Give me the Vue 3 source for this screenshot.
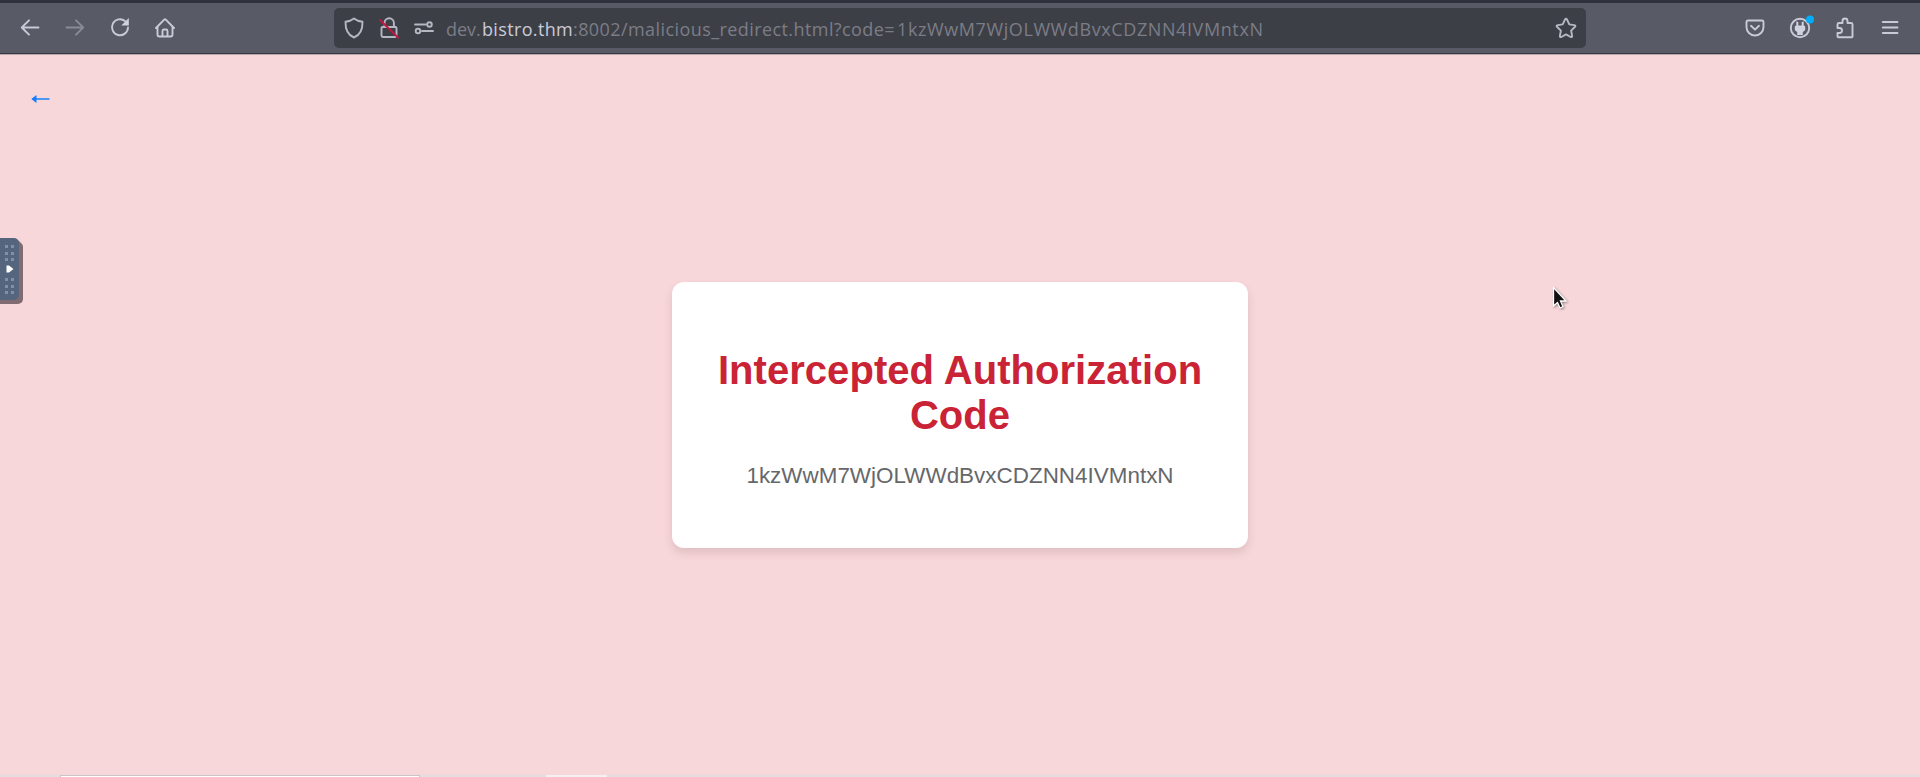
<script setup>
const code = '1kzWwM7WjOLWWdBvxCDZNN4IVMntxN'
</script>

<template>
  <div class="window">
    <header class="toolbar">
      <nav class="nav">
        <svg class="icon" viewBox="0 0 24 24"><path d="M20.500 11.500H4M11 4.300l-7.200 7.200 7.200 7.200" /></svg>
        <svg class="icon dim" viewBox="0 0 24 24"><path d="M3.500 11.500H20M13 4.300l7.200 7.200-7.200 7.200" /></svg>
        <svg class="icon" viewBox="0 0 24 24"><path d="M20 11.500A8 8 0 1 1 17 5" /><path class="solid" d="M20.800 2v7.500h-7.500z" /></svg>
        <svg class="icon" viewBox="0 0 24 24"><path d="M3 12l8.200-8.300q.8-.7 1.600 0L21 12M4.500 11v7.500q0 2 2 2h11q2 0 2-2V11M9.500 20v-5q0-1.500 1.500-1.500h2q1.500 0 1.500 1.500v5" /></svg>
      </nav>

      <div class="address">
        <div class="site">
          <svg class="icon" viewBox="0 0 24 24"><path d="M12 2.500C9.500 4.500 6.500 5.400 3.500 5.800 3.300 12.500 5.200 18.800 12 21.500 18.800 18.800 20.700 12.500 20.500 5.800 17.500 5.400 14.500 4.500 12 2.500z" /></svg>
          <svg class="icon" viewBox="0 0 24 24"><path d="M7.500 11V7a4.700 4.700 0 0 1 9.400 0v4M5.500 11h13q1 0 1 1v7.500q0 1.500-1.500 1.500H6q-1.500 0-1.500-1.500V12q0-1 1-1z" /><path class="slash" d="M3 4l18 17.500" /></svg>
          <svg class="icon" viewBox="0 0 24 24"><path d="M3 8.500h11M10 15h11" /><circle cx="17.500" cy="8.500" r="2.300" /><circle cx="6" cy="15" r="2.300" /></svg>
        </div>
        <div class="url"><span class="sub">dev.</span><span class="host">bistro.thm</span><span class="path">:8002/malicious_redirect.html?code=</span><span class="value">{{ code }}</span></div>
        <svg class="icon star" viewBox="0 0 24 24"><path d="M11 3.500q1-1.700 2 0l2.300 4.900 5 .7q1.800.4.700 1.700l-3.900 3.800 1 5.200q.1 1.700-1.400 1.200L12 18.400 7.300 21q-1.500.5-1.400-1.200l1-5.200L3 10.800q-1.100-1.300.7-1.700l5-.7z" /></svg>
      </div>

      <div class="tools">
        <svg class="icon" viewBox="0 0 24 24"><path d="M5 4.500h14q1.500 0 1.500 1.500v5a8.500 8.500 0 0 1-17 0V6q0-1.500 1.500-1.500z" /><path d="M8 9.800l4 3.800 4-3.800" /></svg>
        <svg class="icon" viewBox="0 0 24 24"><circle cx="12" cy="12" r="9.200" /><path class="solid" d="M8.300 5.500l2 .5v3.500h3.400V6l2-.5v4l1.500.8v4L14.800 16v3H9.200v-3l-2.400-1.700v-4l1.500-.8z" /><circle class="badge" cx="22" cy="3.500" r="4" /></svg>
        <svg class="icon" viewBox="0 0 24 24"><path d="M4.500 12V8.500q0-1.500 1.500-1.500h3.500V5a2.500 2.500 0 0 1 5 0v2H18q1.500 0 1.500 1.500v12q0 .8-.8.8H5.500q-1 0-1-1V17h2a2.500 2.500 0 0 0 0-5z" /></svg>
        <svg class="icon" viewBox="0 0 24 24"><path d="M4.800 6h14.700M4.800 11.500h14.700M4.800 17h14.700" /></svg>
      </div>
    </header>

    <main class="page">
      <a class="back"><svg viewBox="0 0 20 10"><path d="M18.500 5H5" /><path class="head" d="M.3 5L5.500 1v8z" /></svg></a>
      <section class="card">
        <h1>Intercepted Authorization Code</h1>
        <p>{{ code }}</p>
      </section>
    </main>

    <footer class="bottom"><i class="field"></i><i class="tab"></i></footer>

    <aside class="handle">
      <div class="dots"><i v-for="n in 6" :key="n"></i></div>
      <svg viewBox="0 0 8 8"><path d="M.5.5H3L7.500 4 3 7.500H.5z" /></svg>
      <div class="dots"><i v-for="n in 6" :key="n"></i></div>
    </aside>

    <svg class="cursor" viewBox="0 0 18 26"><path d="M1.500 1.500v18.500l4-3.500 2.500 5.500 3-1.300-2.500-5.700h5.500z" /></svg>
  </div>
</template>

<style>
body { margin: 0; overflow: hidden; }
</style>

<style scoped>
.window {
  position: relative;
  display: flex;
  flex-direction: column;
  width: 1920px;
  height: 777px;
  background: #f7d7da;
  font-family: "Liberation Sans", Arial, sans-serif;
}
.toolbar {
  box-sizing: border-box;
  display: flex;
  align-items: center;
  height: 54px;
  padding-left: 18px;
  background: #585a66;
  border-top: 3px solid #2f313d;
  border-bottom: 1px solid #373943;
  box-shadow: 0 1px #b9a7ac;
}
.icon {
  flex: none;
  width: 24px;
  height: 24px;
  fill: none;
  stroke: #c8cbd7;
  stroke-width: 1.9;
  stroke-linecap: round;
  stroke-linejoin: round;
  overflow: visible;
}
.icon.dim { stroke: #888a96; }
.icon .solid { fill: #d0d3df; stroke: none; }
.icon .slash { stroke: #c5173e; stroke-width: 1.8; }
.icon .badge { fill: #00adfa; stroke: none; }
.nav { display: flex; gap: 21px; width: 316px; }
.address {
  box-sizing: border-box;
  display: flex;
  align-items: center;
  width: 1252px;
  height: 40px;
  padding: 0 8px;
  border-radius: 5px;
  background: #3d3f47;
}
.site { display: flex; gap: 11px; width: 104px; }
.site .icon, .star { stroke: #b5b7c2; }
.url {
  flex: 1;
  display: flex;
  padding-top: 2px;
  font: 18px/26px "Open Sans", "Noto Sans", sans-serif;
  white-space: nowrap;
  color: #7b7d86;
}
.sub { width: 36px; }
.host { width: 91px; letter-spacing: 0.35px; color: #c9cbd7; }
.path { width: 324px; letter-spacing: 0.42px; }
.value { letter-spacing: 0.6px; }
.tools { display: flex; gap: 21px; margin-left: 157px; }
.page {
  flex: 1;
  display: flex;
  justify-content: center;
  align-items: center;
  position: relative;
}
.back { position: absolute; left: 31px; top: 40px; display: flex; }
.back svg { width: 20px; height: 10px; fill: none; stroke: #3c91f5; stroke-width: 1.8; }
.back .head { fill: #137dff; stroke: none; }
.card {
  box-sizing: border-box;
  width: 576px;
  height: 266px;
  padding: 66px 40px 0;
  border-radius: 12px;
  background: #fff;
  box-shadow: 0 5px 8px rgba(80, 30, 40, 0.13);
  text-align: center;
}
h1 { margin: 0; color: #c92335; font-size: 40px; line-height: 45px; letter-spacing: 0.05px; }
p { margin: 25px 0 0; color: #66676a; font-size: 22.4px; line-height: 26px; letter-spacing: 0.03px; }
.bottom { display: flex; height: 2px; background: #e4dcde; }
.field {
  box-sizing: border-box;
  width: 360px;
  margin-left: 60px;
  background: #fff;
  border: 1px solid #c8c6ca;
  border-bottom: 0;
}
.tab { width: 61px; margin-left: 126px; background: #f3f1f1; }
.handle {
  position: absolute;
  left: 0;
  top: 238px;
  box-sizing: border-box;
  display: flex;
  flex-direction: column;
  width: 19px;
  height: 62px;
  padding: 7px 0 0 5px;
  border-radius: 0 5px 5px 0;
  background: #55657e;
  box-shadow: 0 4px #806b73, 2px 2px #806b73, 4px 4px #806b73;
}
.handle svg { width: 8px; height: 8px; margin: 4px 0 5px 1px; fill: #fff; }
.dots { display: grid; grid-template-columns: 3px 3px; gap: 3.500px 3px; }
.dots i { width: 3px; height: 3px; background: #8290a4; }
.cursor {
  position: absolute;
  left: 1552px;
  top: 286px;
  width: 18px;
  height: 26px;
  fill: #111;
  stroke: #fff;
  stroke-width: 1.3;
  filter: drop-shadow(1px 1px 1px rgba(0, 0, 0, 0.4));
}
</style>
